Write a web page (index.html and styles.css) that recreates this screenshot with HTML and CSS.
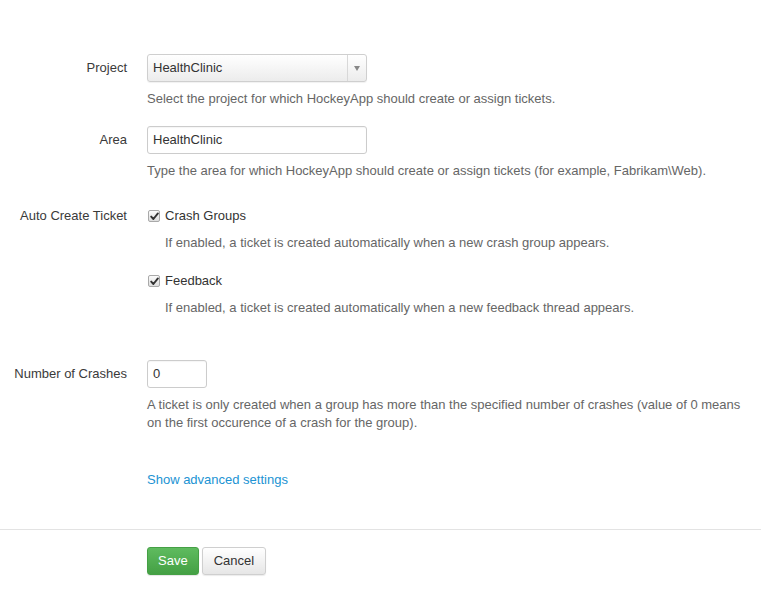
FILE: index.html
```html
<!DOCTYPE html>
<html>
<head>
<meta charset="utf-8">
<link rel="stylesheet" href="styles.css">
</head>
<body>
<form class="form">
  <div class="row">
    <label class="lbl lbl-ctl">Project</label>
    <div class="ctl">
      <div class="select">
        <span class="select-text">HealthClinic</span>
        <span class="select-caret"><span class="tri"></span></span>
      </div>
      <p class="help">Select the project for which HockeyApp should create or assign tickets.</p>
    </div>
  </div>

  <div class="row">
    <label class="lbl lbl-ctl">Area</label>
    <div class="ctl">
      <div class="input input-wide">HealthClinic</div>
      <p class="help">Type the area for which HockeyApp should create or assign tickets (for example, Fabrikam\Web).</p>
    </div>
  </div>

  <div class="row row-checks">
    <label class="lbl lbl-check">Auto Create Ticket</label>
    <div class="ctl">
      <div class="check-item">
        <div class="check-line">
          <span class="cbox"><svg width="9" height="9" viewBox="0 0 9 9"><path d="M1.2 4.6 L3.4 7 L7.9 1.4" fill="none" stroke="#333" stroke-width="1.9" stroke-linecap="round" stroke-linejoin="round"/></svg></span>
          <span>Crash Groups</span>
        </div>
        <p class="help help-check">If enabled, a ticket is created automatically when a new crash group appears.</p>
      </div>
      <div class="check-item">
        <div class="check-line">
          <span class="cbox"><svg width="9" height="9" viewBox="0 0 9 9"><path d="M1.2 4.6 L3.4 7 L7.9 1.4" fill="none" stroke="#333" stroke-width="1.9" stroke-linecap="round" stroke-linejoin="round"/></svg></span>
          <span>Feedback</span>
        </div>
        <p class="help help-check">If enabled, a ticket is created automatically when a new feedback thread appears.</p>
      </div>
    </div>
  </div>

  <div class="row">
    <label class="lbl lbl-ctl">Number of Crashes</label>
    <div class="ctl">
      <div class="input input-small">0</div>
      <p class="help">A ticket is only created when a group has more than the specified number of crashes (value of 0 means on the first occurence of a crash for the group).</p>
    </div>
  </div>

  <div class="row row-link">
    <span class="lbl"></span>
    <div class="ctl"><a class="link" href="#">Show advanced settings</a></div>
  </div>

  <div class="footer">
    <button type="button" class="btn btn-save">Save</button>
    <button type="button" class="btn btn-cancel">Cancel</button>
  </div>
</form>
</body>
</html>
```

FILE: styles.css
```css
* { box-sizing: border-box; }
html, body {
  margin: 0;
  padding: 0;
  background: #fff;
}
body {
  font-family: "Liberation Sans", Arial, Helvetica, sans-serif;
  font-size: 13px;
  color: #333;
  width: 761px;
  height: 601px;
  overflow: hidden;
}
.form {
  padding-top: 54px;
}
.row {
  display: grid;
  grid-template-columns: 127px 1fr;
  column-gap: 20px;
  margin-bottom: 18px;
  padding-right: 15px;
}
.lbl {
  text-align: right;
  color: #3a3a3a;
  white-space: nowrap;
}
.lbl-ctl {
  line-height: 28px;
}
.lbl-check {
  line-height: 20px;
  padding-top: 8px;
}
.ctl {
  min-width: 0;
}
.help {
  margin: 8px 0 0 0;
  line-height: 18px;
  color: #666;
}
.select {
  width: 220px;
  height: 28px;
  display: flex;
  border: 1px solid #cfcfcf;
  border-radius: 3px;
  background: linear-gradient(#ffffff, #ececec);
  box-shadow: 0 1px 1px rgba(0,0,0,0.06);
}
.select-text {
  flex: 1;
  padding-left: 5px;
  line-height: 26px;
  color: #333;
}
.select-caret {
  width: 19px;
  border-left: 1px solid #d8d8d8;
  display: flex;
  align-items: center;
  justify-content: center;
}
.tri {
  width: 0;
  height: 0;
  border-left: 3px solid transparent;
  border-right: 3px solid transparent;
  border-top: 5px solid #888;
}
.input {
  height: 28px;
  border: 1px solid #cccccc;
  border-radius: 3px;
  background: #fff;
  line-height: 26px;
  padding-left: 5px;
  color: #333;
  box-shadow: inset 0 1px 1px rgba(0,0,0,0.04);
}
.input-wide { width: 220px; }
.input-small { width: 60px; }

.row-checks {
  margin-bottom: 43px;
}
.row-checks .ctl {
  padding-top: 8px;
}
.check-item + .check-item {
  margin-top: 19px;
}
.check-line {
  display: flex;
  align-items: center;
  line-height: 20px;
  height: 20px;
}
.cbox {
  width: 12px;
  height: 12px;
  border: 1px solid #a9a9a9;
  border-radius: 2px;
  background: linear-gradient(#fbfbfb, #dedede);
  display: flex;
  align-items: center;
  justify-content: center;
  margin-left: 1px;
  margin-right: 5px;
}
.cbox svg { display: block; }
.help-check {
  padding-left: 18px;
}
.row-link {
  margin-top: 39px;
  margin-bottom: 0;
}
.link {
  color: #2193d3;
  text-decoration: none;
  line-height: 18px;
  display: block;
}
.footer {
  margin-top: 40px;
  border-top: 1px solid #e3e3e3;
  padding-top: 17px;
  padding-left: 147px;
  display: flex;
  gap: 3px;
}
.btn {
  font-family: "Liberation Sans", Arial, Helvetica, sans-serif;
  font-size: 13px;
  height: 28px;
  padding: 0 10px;
  border-radius: 3px;
  line-height: 26px;
  cursor: pointer;
}
.btn-save {
  color: #fff;
  border: 1px solid #45a045;
  background: linear-gradient(#5fbb5f, #44a044);
  box-shadow: 0 1px 1px rgba(0,0,0,0.1);
}
.btn-cancel {
  color: #333;
  padding: 0 11px;
  border: 1px solid #cfcfcf;
  background: linear-gradient(#ffffff, #e6e6e6);
  box-shadow: 0 1px 1px rgba(0,0,0,0.08);
}
```
